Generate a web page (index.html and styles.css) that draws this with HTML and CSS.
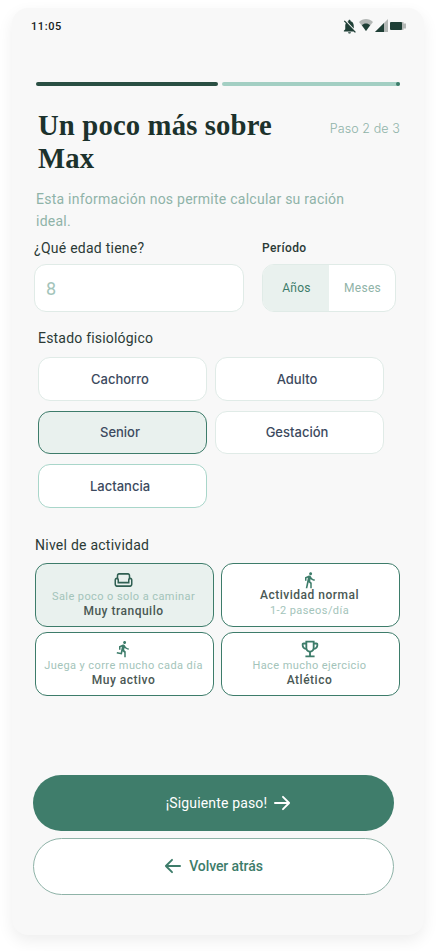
FILE: index.html
```html
<!DOCTYPE html>
<html lang="es">
<head>
<meta charset="utf-8">
<title>Un poco más sobre Max</title>
<link rel="stylesheet" href="styles.css">
</head>
<body>
<main class="phone">
  <header class="status">
    <span class="time">11:05</span>
    <span class="status-icons">
      <svg class="ic-bell" viewBox="0 0 24 24"><path d="M20 18.69L7.84 6.14 5.27 3.49 4 4.76l2.8 2.8v.01c-.52.99-.8 2.16-.8 3.42v5l-2 2v1h13.73l2 2L21 19.72l-1-1.03zM12 22c1.11 0 2-.89 2-2h-4c0 1.11.89 2 2 2zm6-7.32V11c0-3.08-1.64-5.64-4.5-6.32V4c0-.83-.67-1.5-1.5-1.5s-1.5.67-1.5 1.5v.68c-.15.03-.29.08-.42.12-.1.03-.2.07-.3.11h-.01c-.2.08-.4.17-.59.27-.01 0-.01 0-.02.01L18 14.68z"/></svg>
      <svg class="ic-wifi" viewBox="0 0 14 12"><path class="dim" d="M0 3C1.900 1.100 4.300 0 7 0s5.100 1.100 7 3l-7 9z"/><path d="M2.900 6.200C4 5.200 5.400 4.600 7 4.600s3 .6 4.100 1.600L7 12z"/></svg>
      <svg class="ic-signal" viewBox="0 0 13 13"><path class="dim" d="M13 0v13H0z"/><path d="M9 4v9H0z"/></svg>
      <svg class="ic-batt" viewBox="0 0 16 8"><path class="dim" d="M11 0h2.500v1.500H16v5h-2.500V8H11z"/><rect width="12" height="8" rx="1"/></svg>
    </span>
  </header>

  <div class="progress">
    <span class="seg seg-done"></span>
    <span class="seg seg-todo"></span>
  </div>

  <div class="head">
    <h1>Un poco más sobre Max</h1>
    <span class="step">Paso 2 de 3</span>
  </div>
  <p class="sub">Esta información nos permite calcular su ración ideal.</p>

  <div class="age-row">
    <div class="age-col">
      <label class="lab lab-age" for="age">¿Qué edad tiene?</label>
      <input id="age" class="age-input" placeholder="8">
    </div>
    <div class="period-col">
      <span class="lab-small">Período</span>
      <div class="period">
        <span class="per per-on">Años</span>
        <span class="per">Meses</span>
      </div>
    </div>
  </div>

  <section class="state">
    <h2 class="lab state-title">Estado fisiológico</h2>
    <div class="state-grid">
      <button class="opt">Cachorro</button>
      <button class="opt">Adulto</button>
      <button class="opt opt-on">Senior</button>
      <button class="opt">Gestación</button>
      <button class="opt opt-alt">Lactancia</button>
    </div>
  </section>

  <section class="activity">
    <h2 class="lab act-title">Nivel de actividad</h2>
    <div class="act-grid">
      <div class="act act-on">
        <svg class="act-ic ic-sofa" viewBox="0 0 24 24"><g transform="translate(0 -1.800) scale(1 1.150)"><path d="M21 9V7c0-1.650-1.350-3-3-3H6C4.350 4 3 5.350 3 7v2c-1.650 0-3 1.350-3 3v5c0 1.650 1.350 3 3 3h18c1.650 0 3-1.350 3-3v-5c0-1.650-1.350-3-3-3zM5 7c0-.55.45-1 1-1h12c.55 0 1 .45 1 1v2.780c-.61.55-1 1.340-1 2.220v2H6v-2c0-.88-.39-1.670-1-2.220V7zm17 10c0 .55-.45 1-1 1H3c-.55 0-1-.45-1-1v-5c0-.55.45-1 1-1s1 .45 1 1v4h16v-4c0-.55.45-1 1-1s1 .45 1 1v5z"/></g></svg>
        <span class="act-sub">Sale poco o solo a caminar</span>
        <strong class="act-name">Muy tranquilo</strong>
      </div>
      <div class="act act-normal">
        <svg class="act-ic" viewBox="0 0 24 24"><path d="M13.500 5.500c1.100 0 2-.9 2-2s-.9-2-2-2-2 .9-2 2 .9 2 2 2zM9.800 8.900L7 23h2.100l1.800-8 2.100 2v6h2v-7.500l-2.100-2 .6-3C14.800 12 16.800 13 19 13v-2c-1.900 0-3.500-1-4.300-2.400l-1-1.600c-.4-.6-1-1-1.700-1-.3 0-.5.1-.8.1L6 8.300V13h2V9.600l1.800-.7"/></svg>
        <strong class="act-name">Actividad normal</strong>
        <span class="act-sub">1-2 paseos/día</span>
      </div>
      <div class="act">
        <svg class="act-ic" viewBox="0 0 24 24"><path d="M13.490 5.480c1.100 0 2-.9 2-2s-.9-2-2-2-2 .9-2 2 .9 2 2 2zm-3.600 13.900l1-4.400 2.100 2v6h2v-7.500l-2.100-2 .6-3c1.300 1.500 3.300 2.500 5.500 2.500v-2c-1.900 0-3.500-1-4.300-2.400l-1-1.600c-.4-.6-1-1-1.700-1-.3 0-.5.1-.8.1l-5.200 2.200v4.700h2v-3.400l1.800-.7-1.600 8.100-4.900-1-.4 2 7 1.400z"/></svg>
        <span class="act-sub">Juega y corre mucho cada día</span>
        <strong class="act-name">Muy activo</strong>
      </div>
      <div class="act">
        <svg class="act-ic ic-trophy" viewBox="0 0 24 24"><path d="M19 5h-2V3H7v2H5c-1.100 0-2 .9-2 2v1c0 2.550 1.920 4.630 4.390 4.940.63 1.500 1.980 2.630 3.610 2.960V19H7v2h10v-2h-4v-3.100c1.630-.33 2.980-1.460 3.610-2.960C19.080 12.630 21 10.550 21 8V7c0-1.100-.9-2-2-2zM5 8V7h2v3.820C5.840 10.400 5 9.300 5 8zm7 6c-1.650 0-3-1.350-3-3V5h6v6c0 1.650-1.350 3-3 3zm7-6c0 1.300-.84 2.400-2 2.820V7h2v1z"/></svg>
        <span class="act-sub">Hace mucho ejercicio</span>
        <strong class="act-name">Atlético</strong>
      </div>
    </div>
  </section>

  <div class="actions">
    <button class="btn btn-next">¡Siguiente paso!
      <svg class="arrow" viewBox="0 0 18 16"><path d="M1 8h15M9.500 1.500 16 8l-6.500 6.500"/></svg>
    </button>
    <button class="btn btn-back">
      <svg class="arrow" viewBox="0 0 18 16"><path d="M17 8H2M8.500 1.500 2 8l6.500 6.500"/></svg>
      Volver atrás
    </button>
  </div>
</main>
</body>
</html>
```
FILE: styles.css
```css
* { box-sizing: border-box; }
html, body { margin: 0; padding: 0; background: #fff; }
body { width: 436px; height: 951px; overflow: hidden; font-family: Inter, Roboto, sans-serif; }
button { font-family: inherit; cursor: pointer; }

.phone {
  width: 412px;
  height: 927px;
  margin: 8px 12px 0;
  background: #f8f8f8;
  border-radius: 16px;
  box-shadow: 0 6px 16px rgba(0,0,0,.07);
  padding: 0 24px 0 21px;
  display: flex;
  flex-direction: column;
}

.status { display: flex; justify-content: space-between; align-items: center; height: 20px; margin: 8px -6px 0 -2px; }
.time { font: 500 11px Roboto, sans-serif; letter-spacing: .6px; color: #14201c; }
.status-icons { display: flex; align-items: center; gap: 2px; }
.status-icons svg { fill: #1f3f36; display: block; }
.status-icons .dim { fill: #b4b8b6; }
.ic-bell { width: 17px; height: 17px; margin-right: -1px; }
.ic-wifi { width: 14px; height: 12px; margin-top: -2px; }
.ic-signal { width: 13px; height: 13px; margin-top: -2px; }
.ic-batt { width: 16px; height: 8px; }

.progress { display: flex; gap: 4px; margin: 46px 0 0 3px; }
.seg { display: block; height: 4px; border-radius: 2px; }
.seg-done { width: 182px; background: #2a4f43; }
.seg-todo { width: 179px; background: #a3cfc3; position: relative; }
.seg-todo::after { content: ""; position: absolute; right: 0; top: 0; width: 4px; height: 4px; border-radius: 50%; background: #3d7c6a; }

.head { display: flex; justify-content: space-between; margin: 23px 0 0 5px; width: 362px; }
h1 { margin: 0; width: 250px; font: 700 28.700px/33px "Liberation Serif", serif; color: #1c322c; letter-spacing: .15px; }
.step { font: 300 12.500px/20px Inter, sans-serif; color: #8fb3a8; margin-top: 10px; letter-spacing: .1px; }

.sub { margin: 13px 0 0 3px; width: 340px; font: 400 14px/22px Roboto, sans-serif; letter-spacing: .25px; color: #8fb3a8; }

.age-row { display: flex; gap: 18px; margin: 6px 0 0 1px; }
.age-col { width: 210px; }
.period-col { width: 134px; }
.lab { display: block; margin: 0; font: 400 14px/20px Roboto, sans-serif; letter-spacing: .25px; color: #2b3a36; }
.lab-small { display: block; font: 500 12px/20px Roboto, sans-serif; letter-spacing: .4px; color: #2b3a36; }
.age-input { display: block; width: 100%; height: 48px; margin-top: 6px; padding: 0 11px; background: #fff; border: 1.500px solid #e0ebe7; border-radius: 12px; font: 400 18px Roboto, sans-serif; color: #8fb3a8; outline: none; }
.age-input::placeholder { color: #a3c4ba; opacity: 1; }
.period { display: flex; height: 48px; margin-top: 6px; background: #fff; border: 1.500px solid #e0ebe7; border-radius: 12px; overflow: hidden; }
.per { flex: 1; display: flex; align-items: center; justify-content: center; padding-left: 1px; font: 400 12px Roboto, sans-serif; letter-spacing: .3px; color: #8fb3a8; }
.per-on { background: #e9f1ee; color: #3d7c6a; }

.state { margin: 16px 0 0 5px; }
.state-title { letter-spacing: .2px; }
.state-grid { display: grid; grid-template-columns: 169px 169px; column-gap: 8px; row-gap: 10px; margin-top: 9px; }
.opt { height: 43.500px; background: #fff; border: 1.500px solid #e0ebe7; border-radius: 12px; font: 500 13px Inter, sans-serif; color: #3c4a5e; padding: 0 5px 0 0; }
.opt-on { background: #e9f1ee; border-color: #3d7c6a; }
.opt-alt { border-color: #a9d6ca; }

.activity { margin: 27px 0 0 2px; }
.act-grid { display: grid; grid-template-columns: 179px 179px; column-gap: 7px; row-gap: 5px; margin-top: 8px; }
.act { height: 64px; padding: 7px 2px 0 0; display: flex; flex-direction: column; align-items: center; background: #fff; border: 1px solid #3d7c6a; border-radius: 12px; text-align: center; }
.act-on { background: #e9f1ee; }
.act-ic { display: block; width: 19px; height: 18px; flex: none; fill: #3d7c6a; }
.act-normal .act-ic { margin-bottom: -1px; }
.ic-sofa { fill: #2f5f52; }
.ic-trophy { width: 22px; height: 22px; margin: -2px 0; }
.act-sub { font: 400 11px/15px Roboto, sans-serif; letter-spacing: .42px; color: #a3c4ba; white-space: nowrap; }
.act-name { font: 500 12px/15px Roboto, sans-serif; letter-spacing: .5px; color: #4a5854; white-space: nowrap; }

.actions { display: flex; flex-direction: column; gap: 7px; margin: 79px 0 0 0; width: 361px; }
.btn { height: 57px; border-radius: 29px; display: flex; align-items: center; justify-content: center; gap: 7px; font: 500 14px Roboto, sans-serif; padding: 0; }
.btn-next { height: 56px; background: #3f7d6b; border: 0; color: #fff; padding-left: 30px; font-weight: 400; letter-spacing: .15px; }
.btn-back { background: #fff; border: 1px solid #8fb3a8; color: #3d7c6a; gap: 8px; letter-spacing: -.1px; }
.arrow { display: block; width: 17px; height: 16px; fill: none; stroke: currentColor; stroke-width: 2; stroke-linecap: round; stroke-linejoin: round; }
```
